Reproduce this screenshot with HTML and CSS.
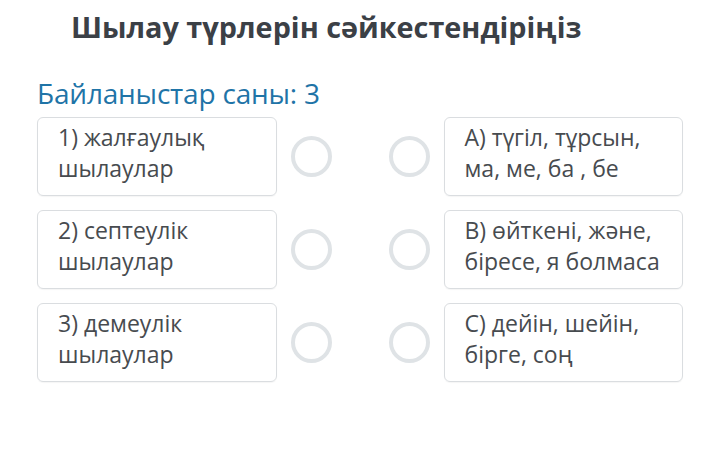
FILE: index.html
```html
<!DOCTYPE html>
<html>
<head>
<meta charset="utf-8">
<link rel="stylesheet" href="styles.css">
</head>
<body>
<div class="page">
  <h1 class="title">Шылау түрлерін сәйкестендіріңіз</h1>
  <div class="count">Байланыстар саны: 3</div>
  <div class="rows">
    <div class="row">
      <div class="card">1) жалғаулық шылаулар</div>
      <div class="dot"></div>
      <div class="dot"></div>
      <div class="card">А) түгіл, тұрсын, ма, ме, ба , бе</div>
    </div>
    <div class="row">
      <div class="card">2) септеулік шылаулар</div>
      <div class="dot"></div>
      <div class="dot"></div>
      <div class="card">В) өйткені, және, біресе, я болмаса</div>
    </div>
    <div class="row">
      <div class="card">3) демеулік шылаулар</div>
      <div class="dot"></div>
      <div class="dot"></div>
      <div class="card">С) дейін, шейін, бірге, соң</div>
    </div>
  </div>
</div>
</body>
</html>
```
FILE: styles.css
```css
* { box-sizing: border-box; }
html, body { margin: 0; padding: 0; background: #fff; }
body { font-family: "Open Sans", "Noto Sans", sans-serif; }
.page { width: 720px; height: 456px; padding: 7px 37px 0 37px; }
.title {
  margin: 0 0 0 34px;
  font-size: 28.8px;
  font-weight: 700;
  color: #3b4046;
  line-height: 40px;
}
.count {
  margin-top: 28px;
  font-size: 28px;
  color: #1f74a7;
  line-height: 36px;
  letter-spacing: -0.2px;
}
.rows { display: flex; flex-direction: column; gap: 14px; margin-top: 6px; }
.row { display: flex; align-items: center; }
.card {
  width: 240px;
  min-height: 79px;
  border: 1.5px solid #dadde0;
  border-radius: 6px;
  padding: 4px 10px 8px 20px;
  font-size: 23px;
  line-height: 31px;
  color: #474b4f;
  box-shadow: 0 1px 1px rgba(0,0,0,0.04);
}
.dot {
  width: 41px;
  height: 41px;
  border: 4px solid #dfe3e6;
  border-radius: 50%;
  flex: none;
}
.row .card:first-child + .dot { margin-left: 14px; }
.dot + .dot { margin-left: 57px; margin-right: 14px; }
```
